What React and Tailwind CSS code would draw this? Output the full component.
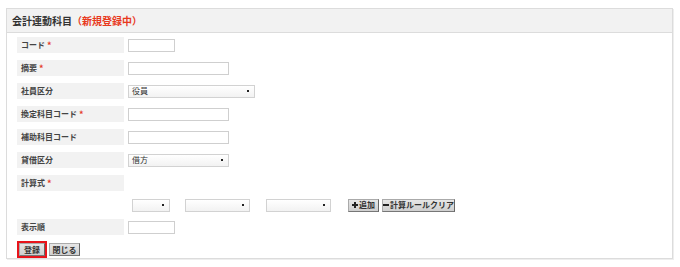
import React from 'react';

const font = { fontFamily: '"Noto Sans CJK JP", "Liberation Sans", sans-serif' };

const Label = ({ children, required }) => (
	<div className="w-[107px] h-[16px] bg-[#f2f2f2] flex items-center pl-[4px] text-[8px] font-bold text-[#444] leading-none whitespace-nowrap">
		{children}
		{required && <span className="text-[#e53b2c] ml-[2px] text-[9px]">*</span>}
	</div>
);

const Input = ({ w }) => (
	<div className={`h-[13px] border border-[#cfcfcf] bg-white ${w}`} />
);

const Select = ({ w, value }) => (
	<div className={`h-[13px] border border-[#d2d2d2] bg-gradient-to-b from-white to-[#f2f2f2] flex items-center justify-between px-[3px] text-[8px] text-[#333] leading-none whitespace-nowrap ${w}`}>
		<span>{value}</span>
		<span className="w-[2px] h-[2px] bg-[#222] mr-[2px]" />
	</div>
);

const Row = ({ label, required, children }) => (
	<div className="flex items-center h-[16px]">
		<Label required={required}>{label}</Label>
		<div className="ml-[4px] flex items-center">{children}</div>
	</div>
);

const Btn = ({ children, className = '' }) => (
	<div className={`h-[13px] flex items-center px-[3px] bg-gradient-to-b from-[#e6e6e6] to-[#cfcfcf] border border-[#aaa] border-r-[#666] border-b-[#777] text-[8px] font-bold text-[#333] leading-none whitespace-nowrap ${className}`}>
		{children}
	</div>
);

export default function App() {
	return (
		<div className="w-[680px] h-[267px] bg-white pt-[8px] pl-[6px]" style={font}>
			<div className="w-[667px] h-[251px] border border-[#dcdcdc] shadow-[1px_1px_0_#eee]">
				<div className="h-[24px] bg-[#f2f2f2] border-b border-[#dcdcdc] flex items-center pl-[5px] text-[10px] font-bold leading-none">
					<span className="text-[#333]">会計連動科目</span>
					<span className="text-[#e8391d]">（新規登録中）</span>
				</div>
				<div className="pl-[10px] pt-[4px] flex flex-col gap-[7px]">
					<Row label="コード" required><Input w="w-[47px]" /></Row>
					<Row label="摘要" required><Input w="w-[101px]" /></Row>
					<Row label="社員区分"><Select w="w-[127px]" value="役員" /></Row>
					<Row label="換定科目コード" required><Input w="w-[101px]" /></Row>
					<Row label="補助科目コード"><Input w="w-[101px]" /></Row>
					<Row label="貸借区分"><Select w="w-[101px]" value="借方" /></Row>
					<Row label="計算式" required />
					<div className="flex items-center h-[14px] pl-[115px]">
						<Select w="w-[38px]" value="" />
						<div className="w-[15px]" />
						<Select w="w-[65px]" value="" />
						<div className="w-[16px]" />
						<Select w="w-[65px]" value="" />
						<div className="w-[17px]" />
						<Btn className="w-[31px] justify-center gap-[1px]">
							<svg width="6" height="6" viewBox="0 0 6 6" className="shrink-0"><path d="M2 0h2v2h2v2H4v2H2V4H0V2h2z" fill="#222" /></svg>
							追加
						</Btn>
						<div className="w-[3px]" />
						<Btn className="w-[73px] gap-[1px] justify-center">
							<svg width="6" height="6" viewBox="0 0 6 6" className="shrink-0"><path d="M0 2h6v2H0z" fill="#222" /></svg>
							計算ルールクリア
						</Btn>
					</div>
					<Row label="表示順"><Input w="w-[47px]" /></Row>
					<div className="flex items-center gap-[2px] -mt-[1px]">
						<div className="border-2 border-[#e8141b]">
							<Btn className="w-[26px] justify-center">登録</Btn>
						</div>
						<Btn className="w-[31px] justify-center">閉じる</Btn>
					</div>
				</div>
			</div>
		</div>
	);
}
